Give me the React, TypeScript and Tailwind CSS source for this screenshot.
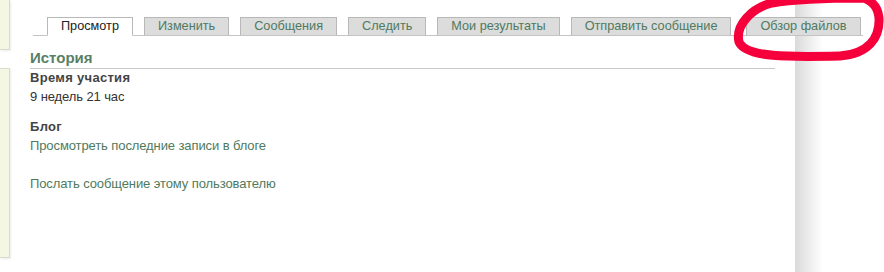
export default function App() {
  const tabs = ["Изменить", "Сообщения", "Следить", "Мои результаты", "Отправить сообщение"];
  return (
    <div className="relative w-[884px] h-[272px] bg-white overflow-hidden flex" style={{ fontFamily: '"Liberation Sans", Arial, sans-serif' }}>
      <div className="w-[10px] shrink-0 flex flex-col">
        <div className="h-[50px] bg-[#f4f7e4] border-r border-b border-[#d8dccb] shadow-[1px_1px_2px_rgba(0,0,0,0.08)]" />
        <div className="mt-[18px] h-[190px] bg-[#f4f7e4] border-r border-t border-b border-[#d8dccb] shadow-[1px_1px_2px_rgba(0,0,0,0.08)]" />
      </div>
      <div className="relative z-10 w-[785px] shrink-0 pl-[20px] pr-[20px] pt-[17px]">
        <div className="flex items-end gap-[11px] pl-[14px] ml-[3px] w-[830px] border-b border-[#c4c4c4] h-[19px] whitespace-nowrap">
          <div className="shrink-0 h-[19px] px-[13px] -mb-px bg-white border border-[#b8b8b8] border-b-white text-[12.7px] text-[#222] flex items-center">Просмотр</div>
          {tabs.map((t) => (
            <div key={t} className="shrink-0 h-[18px] px-[13px] bg-[#dcdcdc] border border-[#b8b8b8] border-b-0 text-[12.7px] text-[#4f7a5e] flex items-center">{t}</div>
          ))}
          <div className="shrink-0 ml-[4px] h-[18px] px-[13px] bg-[#dcdcdc] border border-[#b8b8b8] border-b-0 text-[12.7px] text-[#4f7a5e] flex items-center">Обзор файлов</div>
        </div>
        <div className="mt-[13px] text-[15px] font-bold text-[#5a7f66] leading-[18px]">История</div>
        <div className="border-b border-[#c8c8c8] mt-[1px]" />
        <div className="text-[13px] font-bold text-[#444] leading-[18px] tracking-[0.3px]">Время участия</div>
        <div className="mt-[1px] text-[13px] text-[#333] leading-[18px] tracking-[-0.1px]">9 недель 21 час</div>
        <div className="mt-[12px] text-[13px] font-bold text-[#444] leading-[18px] tracking-[0.3px]">Блог</div>
        <div className="mt-[1px] text-[13px] text-[#4f7a5e] leading-[18px] tracking-[-0.1px]">Просмотреть последние записи в блоге</div>
        <div className="mt-[20px] text-[13px] text-[#4f7a5e] leading-[18px] tracking-[-0.1px]">Послать сообщение этому пользователю</div>
      </div>
      <div className="w-[28px] shrink-0 bg-gradient-to-r from-[#dadada] to-white" />
      <div className="flex-1 bg-white" />
      <svg className="absolute left-0 top-0 z-20 pointer-events-none" width="884" height="272">
        <path d="M 772 3 C 752 8, 735 25, 739 42 C 746 58, 790 57, 840 56 C 868 54, 880 38, 879 18 C 878 8, 874 2, 864 -2 M 772 3 C 795 -1, 835 -2, 864 -2" fill="none" stroke="#f5003a" strokeWidth="9" strokeLinecap="round" />
      </svg>
    </div>
  );
}
